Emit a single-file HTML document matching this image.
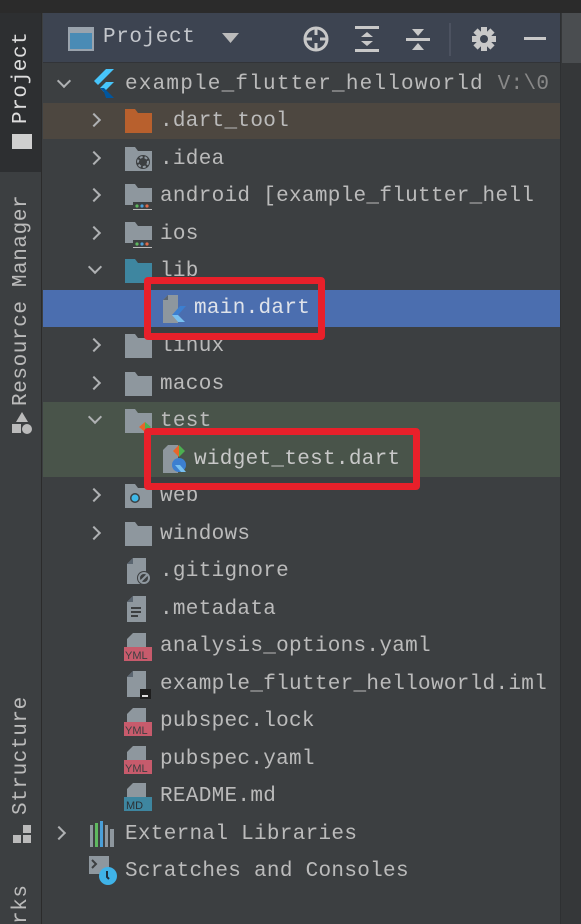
<!DOCTYPE html>
<html><head><meta charset="utf-8"><style>
*{margin:0;padding:0;box-sizing:border-box}
body{width:581px;height:924px;background:#3c3f41;position:relative;overflow:hidden;font-family:"Liberation Mono",monospace;color:#bbbbbb}
.abs{position:absolute}
.t{position:absolute;font-size:21px;letter-spacing:0.3px;line-height:37px;white-space:nowrap;height:37px}
.row{position:absolute;left:43px;width:517px;height:37px}
.chev{position:absolute;width:10px;height:10px;border-right:2px solid #afb1b3;border-bottom:2px solid #afb1b3}
.r{transform:rotate(-45deg)}
.d{transform:rotate(45deg)}
.box{position:absolute;border:7px solid #e8202a;border-radius:4px}
.vt{position:absolute;transform:rotate(-90deg);transform-origin:left top;font-size:21px;letter-spacing:0.6px;white-space:nowrap;color:#bbbbbb}
</style></head><body>
<div class="abs" style="left:0;top:0;width:581px;height:13px;background:#2b2b2b"></div>
<div class="abs" style="left:0;top:13px;width:42px;height:911px;background:#3c3f41;border-right:1px solid #2b2b2b"></div>
<div class="abs" style="left:0;top:13px;width:41px;height:159px;background:#2d2f31"></div>
<div class="vt" style="left:10px;top:124px;color:#ddd">Project</div>
<div class="abs" style="left:12px;top:134px;width:20px;height:15px;background:#cfcfcf"></div>
<div class="vt" style="left:10px;top:406px">Resource Manager</div>
<svg class="abs" style="left:11px;top:412px" width="22" height="24"><polygon points="11,0 17,10 5,10" fill="#bbb"/><rect x="1" y="12" width="9" height="9" fill="#bbb"/><circle cx="16" cy="17" r="5" fill="#bbb"/></svg>
<div class="vt" style="left:10px;top:815px">Structure</div>
<svg class="abs" style="left:13px;top:825px" width="18" height="20"><rect x="0" y="10" width="8" height="8" fill="#bbb"/><rect x="10" y="10" width="8" height="8" fill="#bbb"/><rect x="10" y="0" width="8" height="8" fill="#bbb"/></svg>
<div class="vt" style="left:10px;top:924px">rks</div>
<div class="abs" style="left:560px;top:13px;width:21px;height:911px;background:#353739;border-left:1px solid #2e3032"></div>
<div class="abs" style="left:562px;top:13px;width:19px;height:50px;background:#4a4d50"></div>
<div class="abs" style="left:43px;top:13px;width:517px;height:50px;background:#3d4451;border-bottom:1px solid #323438"></div>
<svg class="abs" style="left:68px;top:27px" width="26" height="24"><rect x="1" y="1" width="24" height="22" fill="#4a8bb5" stroke="#9aa3ad" stroke-width="2"/><rect x="2" y="2" width="22" height="4" fill="#9aa3ad"/></svg>
<div class="t" style="left:103px;top:19px;font-size:21px;letter-spacing:0.6px;color:#c4c7cc">Project</div>
<svg class="abs" style="left:222px;top:33px" width="18" height="12"><polygon points="0,0 17,0 8.5,10" fill="#bbb"/></svg>
<svg class="abs" style="left:302px;top:25px" width="28" height="28"><circle cx="14" cy="14" r="11" fill="none" stroke="#c8c8c8" stroke-width="3"/><path d="M14 3v7M14 18v7M3 14h7M18 14h7" stroke="#c8c8c8" stroke-width="3"/></svg>
<svg class="abs" style="left:355px;top:26px" width="24" height="27"><rect x="0" y="0" width="24" height="3" fill="#c8c8c8"/><rect x="0" y="23" width="24" height="3" fill="#c8c8c8"/><polygon points="12,6 18,11 6,11" fill="#c8c8c8"/><polygon points="12,20 18,15 6,15" fill="#c8c8c8"/></svg>
<svg class="abs" style="left:406px;top:26px" width="24" height="27"><polygon points="12,10 18,3 6,3" fill="#c8c8c8"/><rect x="0" y="12" width="24" height="3" fill="#c8c8c8"/><polygon points="12,17 18,24 6,24" fill="#c8c8c8"/></svg>
<div class="abs" style="left:449px;top:23px;width:2px;height:33px;background:#4c5260"></div>
<svg class="abs" style="left:471px;top:26px" width="26" height="26" viewBox="-13 -13 26 26"><g fill="#c8c8c8"><circle r="8"/><rect x="-3" y="-12" width="6" height="24"/><rect x="-3" y="-12" width="6" height="24" transform="rotate(45)"/><rect x="-3" y="-12" width="6" height="24" transform="rotate(90)"/><rect x="-3" y="-12" width="6" height="24" transform="rotate(135)"/></g><circle r="4" fill="#3d4451"/></svg>
<div class="abs" style="left:524px;top:37px;width:22px;height:3px;background:#c8c8c8"></div>

<div class="row" style="top:103px;height:36px;background:#4d4740"></div>
<div class="row" style="top:290px;height:37px;background:#4b6eaf"></div>
<div class="row" style="top:402px;height:75px;background:#49544a"></div>

<div class="chev d" style="left:59px;top:76px"></div>
<svg class="abs" style="left:92px;top:69px" width="24" height="30"><polygon points="14,0 22,0 6,16 2,12" fill="#47c5fb"/><polygon points="14,13 22,13 12,23 8,19" fill="#47c5fb"/><polygon points="8,19 12,23 14,29 22,29 12,19" fill="#00569e"/></svg>
<div class="t" style="left:125px;top:66px;letter-spacing:1.2px">example_flutter_helloworld <span style="color:#888;letter-spacing:0.3px">V:\0</span></div>

<div class="chev r" style="left:89px;top:115px"></div>
<svg class="abs" style="left:125px;top:109px" width="27" height="24"><path d="M0 0h10l3 4h14v20H0z" fill="#b8602d"/></svg>
<div class="t" style="left:160px;top:103px">.dart_tool</div>

<div class="chev r" style="left:89px;top:153px"></div>
<svg class="abs" style="left:125px;top:147px" width="27" height="24"><path d="M0 0h10l3 4h14v20H0z" fill="#8e979e"/><circle cx="18" cy="15" r="7" fill="#3c3f41"/><circle cx="18" cy="15" r="5" fill="none" stroke="#8e979e" stroke-width="2" stroke-dasharray="3 2"/></svg>
<div class="t" style="left:160px;top:141px">.idea</div>

<div class="chev r" style="left:89px;top:190px"></div>
<svg class="abs" style="left:125px;top:184px" width="28" height="26"><path d="M0 0h10l3 4h14v17H0z" fill="#8e979e"/><rect x="8" y="18" width="20" height="8" fill="#3c3f41"/><circle cx="12" cy="22" r="1.6" fill="#5fb85f"/><circle cx="17" cy="22" r="1.6" fill="#4a9fd8"/><circle cx="22" cy="22" r="1.6" fill="#e06c4a"/><rect x="8" y="25" width="19" height="1" fill="#bbb"/></svg>
<div class="t" style="left:160px;top:178px">android [example_flutter_hell</div>

<div class="chev r" style="left:89px;top:228px"></div>
<svg class="abs" style="left:125px;top:222px" width="28" height="26"><path d="M0 0h10l3 4h14v17H0z" fill="#8e979e"/><rect x="8" y="18" width="20" height="8" fill="#3c3f41"/><circle cx="12" cy="22" r="1.6" fill="#5fb85f"/><circle cx="17" cy="22" r="1.6" fill="#4a9fd8"/><circle cx="22" cy="22" r="1.6" fill="#e06c4a"/><rect x="8" y="25" width="19" height="1" fill="#bbb"/></svg>
<div class="t" style="left:160px;top:216px">ios</div>

<div class="chev d" style="left:90px;top:262px"></div>
<svg class="abs" style="left:125px;top:259px" width="27" height="24"><path d="M0 0h10l3 4h14v20H0z" fill="#3e86a0"/></svg>
<div class="t" style="left:160px;top:253px">lib</div>

<svg class="abs" style="left:163px;top:295px" width="24" height="28"><path d="M5 0h10v28H0V5z" fill="#8e979e"/><polygon points="0,5 5,0 5,5" fill="#5a6570"/><path d="M9 20l8-9h6l-8 9z" fill="#3c7fd0"/><path d="M9 20l6 7h7l-7-7z" fill="#78c0f0"/></svg>
<div class="t" style="left:194px;top:290px;color:#dfe3ea">main.dart</div>

<div class="chev r" style="left:89px;top:340px"></div>
<svg class="abs" style="left:125px;top:334px" width="27" height="24"><path d="M0 0h10l3 4h14v20H0z" fill="#8e979e"/></svg>
<div class="t" style="left:160px;top:328px">linux</div>

<div class="chev r" style="left:89px;top:378px"></div>
<svg class="abs" style="left:125px;top:372px" width="27" height="24"><path d="M0 0h10l3 4h14v20H0z" fill="#8e979e"/></svg>
<div class="t" style="left:160px;top:366px">macos</div>

<div class="chev d" style="left:90px;top:412px"></div>
<svg class="abs" style="left:125px;top:409px" width="30" height="28"><path d="M0 0h10l3 4h14v20H0z" fill="#8e979e"/><polygon points="14,18 20,13 20,23" fill="#e8652a"/><polygon points="26,18 20,13 20,23" fill="#4caf50"/></svg>
<div class="t" style="left:160px;top:403px">test</div>

<svg class="abs" style="left:163px;top:443px" width="26" height="30"><path d="M5 2h10v28H0V7z" fill="#8e979e"/><polygon points="10,8 16,2 16,14" fill="#e8652a"/><polygon points="22,8 16,2 16,14" fill="#4caf50"/><circle cx="16" cy="22" r="7" fill="#3c7fd0"/><path d="M12 22l6 7h5l-6-7z" fill="#78c0f0"/></svg>
<div class="t" style="left:194px;top:441px;color:#c8c8c8">widget_test.dart</div>

<div class="chev r" style="left:89px;top:490px"></div>
<svg class="abs" style="left:125px;top:484px" width="27" height="24"><path d="M0 0h10l3 4h14v20H0z" fill="#8e979e"/><circle cx="10" cy="14" r="5" fill="#3c3f41"/><circle cx="10" cy="14" r="3.5" fill="#3fb8e8"/></svg>
<div class="t" style="left:160px;top:478px">web</div>

<div class="chev r" style="left:89px;top:528px"></div>
<svg class="abs" style="left:125px;top:522px" width="27" height="24"><path d="M0 0h10l3 4h14v20H0z" fill="#8e979e"/></svg>
<div class="t" style="left:160px;top:516px">windows</div>

<svg class="abs" style="left:127px;top:558px" width="26" height="28"><path d="M6 0h13v26H0V6z" fill="#8e979e"/><polygon points="0,6 6,0 6,6" fill="#5a6570"/><circle cx="17" cy="20" r="7" fill="#3c3f41"/><circle cx="17" cy="20" r="5" fill="none" stroke="#8e979e" stroke-width="2"/><path d="M13.5 23.5l7-7" stroke="#8e979e" stroke-width="2"/></svg>
<div class="t" style="left:160px;top:553px">.gitignore</div>

<svg class="abs" style="left:127px;top:596px" width="26" height="28"><path d="M6 0h13v26H0V6z" fill="#8e979e"/><polygon points="0,6 6,0 6,6" fill="#5a6570"/><path d="M4 12h10M4 16h10M4 20h7" stroke="#3c3f41" stroke-width="2"/></svg>
<div class="t" style="left:160px;top:591px">.metadata</div>

<svg class="abs" style="left:124px;top:633px" width="30" height="28"><path d="M9 0h13v18H3V6z" fill="#8e979e"/><rect x="0" y="14" width="28" height="14" fill="#c75b6c"/><text x="1" y="26" font-family="Liberation Sans" font-size="11" fill="#3c3f41">YML</text></svg>
<div class="t" style="left:160px;top:628px">analysis_options.yaml</div>

<svg class="abs" style="left:127px;top:671px" width="26" height="28"><path d="M6 0h13v26H0V6z" fill="#8e979e"/><polygon points="0,6 6,0 6,6" fill="#5a6570"/><rect x="13" y="18" width="11" height="10" fill="#1e1e1e"/><rect x="15" y="24" width="6" height="2" fill="#ddd"/></svg>
<div class="t" style="left:160px;top:666px">example_flutter_helloworld.iml</div>

<svg class="abs" style="left:124px;top:708px" width="30" height="28"><path d="M9 0h13v18H3V6z" fill="#8e979e"/><rect x="0" y="14" width="28" height="14" fill="#c75b6c"/><text x="1" y="26" font-family="Liberation Sans" font-size="11" fill="#3c3f41">YML</text></svg>
<div class="t" style="left:160px;top:703px">pubspec.lock</div>

<svg class="abs" style="left:124px;top:746px" width="30" height="28"><path d="M9 0h13v18H3V6z" fill="#8e979e"/><rect x="0" y="14" width="28" height="14" fill="#c75b6c"/><text x="1" y="26" font-family="Liberation Sans" font-size="11" fill="#3c3f41">YML</text></svg>
<div class="t" style="left:160px;top:741px">pubspec.yaml</div>

<svg class="abs" style="left:124px;top:783px" width="30" height="28"><path d="M9 0h13v18H3V6z" fill="#8e979e"/><rect x="0" y="14" width="28" height="14" fill="#3e86a0"/><text x="2" y="26" font-family="Liberation Sans" font-size="11" fill="#2b3035">MD</text></svg>
<div class="t" style="left:160px;top:778px">README.md</div>

<div class="chev r" style="left:54px;top:828px"></div>
<svg class="abs" style="left:90px;top:821px" width="27" height="26"><rect x="0" y="4" width="3" height="22" fill="#8e979e"/><rect x="5" y="2" width="3" height="24" fill="#5fb85f"/><rect x="10" y="0" width="3" height="26" fill="#4a9fd8"/><rect x="15" y="4" width="3" height="22" fill="#8e979e"/><rect x="20" y="8" width="4" height="18" fill="#8e979e"/></svg>
<div class="t" style="left:125px;top:816px">External Libraries</div>

<svg class="abs" style="left:89px;top:856px" width="30" height="30"><rect x="0" y="0" width="20" height="18" fill="#8e979e"/><path d="M3 4l4 4-4 4" stroke="#3c3f41" stroke-width="2" fill="none"/><circle cx="19" cy="20" r="9" fill="#3fb3e8"/><path d="M18 15v6l2 2" stroke="#1e3040" stroke-width="2" fill="none"/></svg>
<div class="t" style="left:125px;top:853px">Scratches and Consoles</div>

<div class="box" style="left:144px;top:277px;width:181px;height:63px"></div>
<div class="box" style="left:144px;top:428px;width:276px;height:62px"></div>
</body></html>
